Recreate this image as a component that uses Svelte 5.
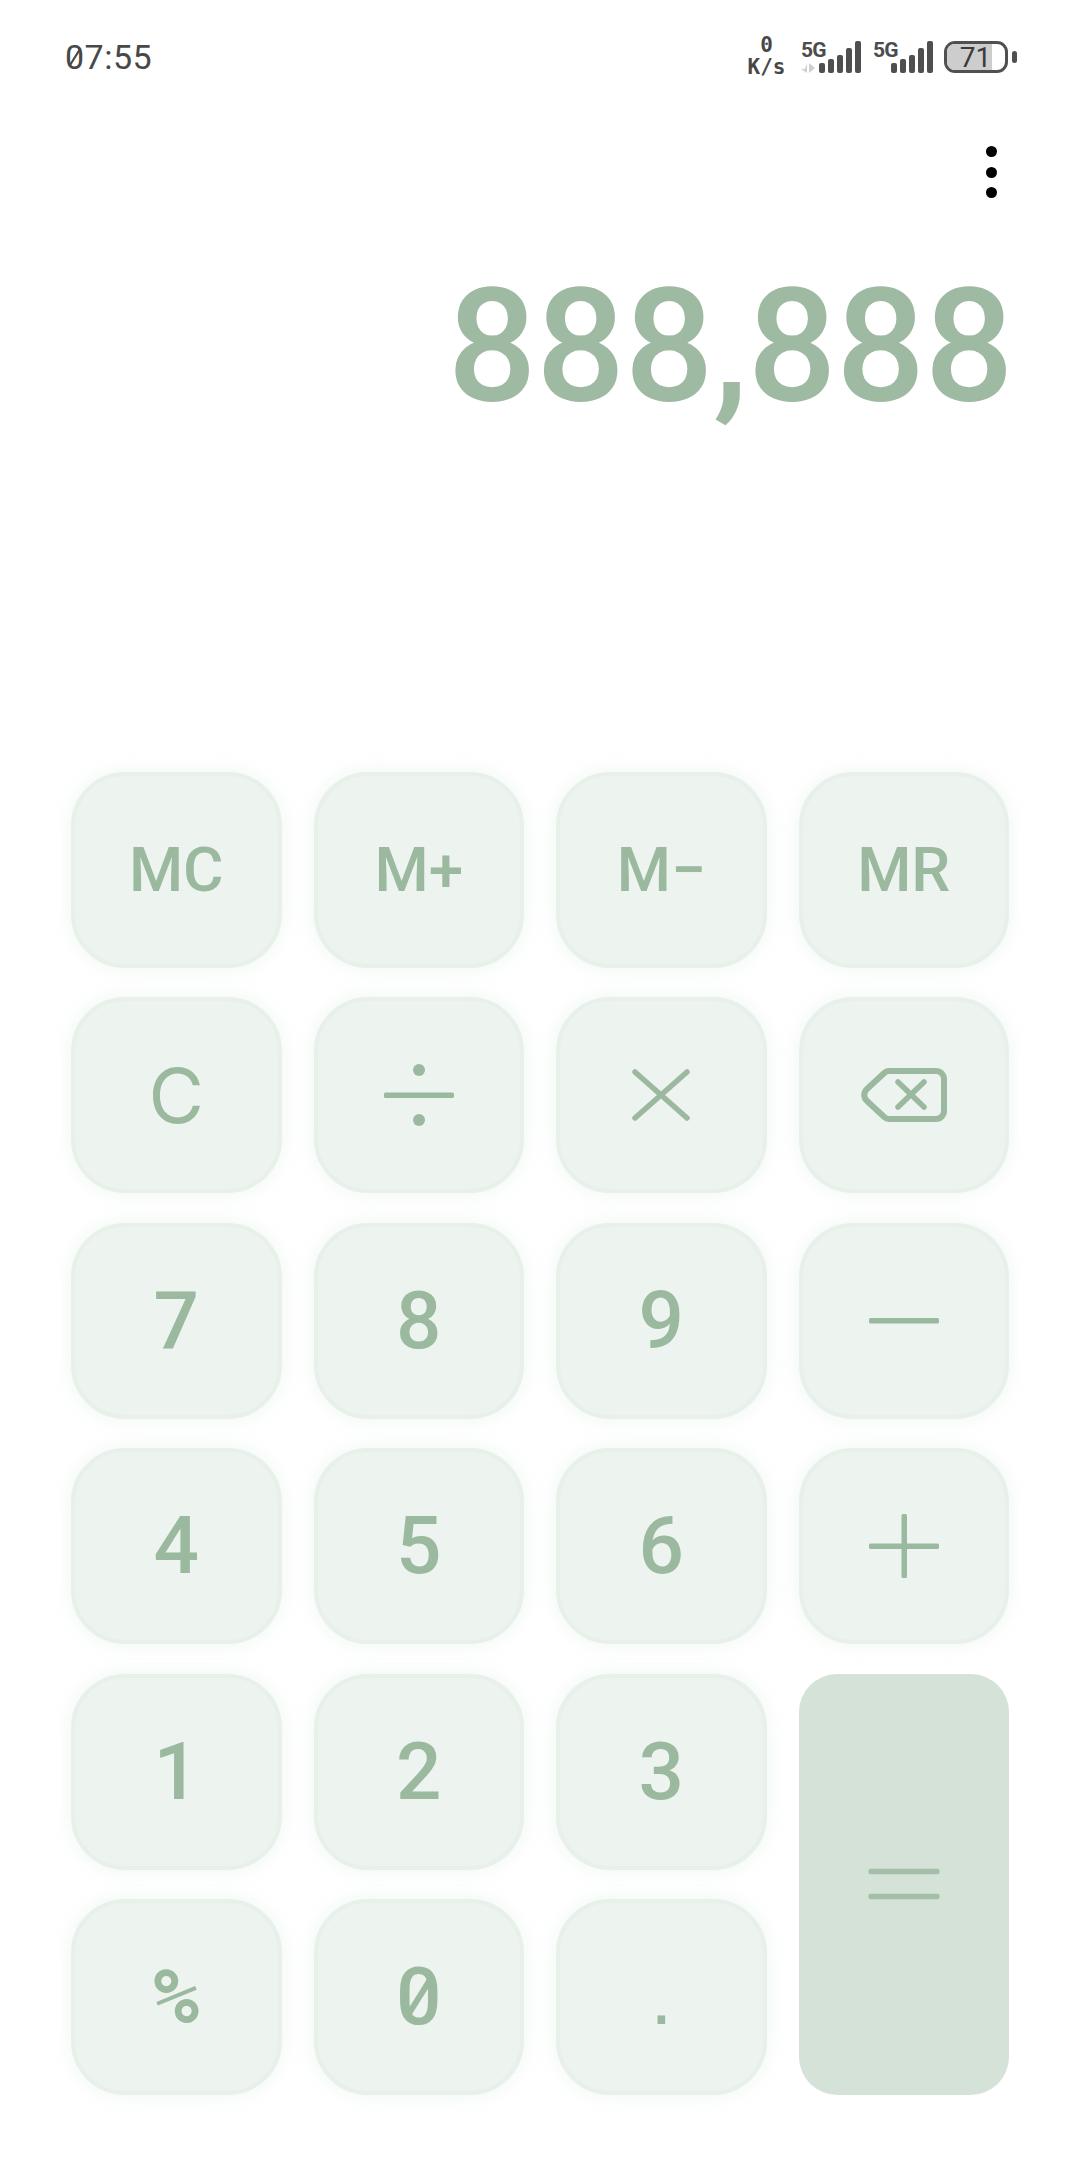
<script>
  // keys in reading order, the equals key spans two rows and is placed on its own
  const keys = [
    { label: 'MC', type: 'mem' },
    { label: 'M+', type: 'mem' },
    { label: 'M−', type: 'mem' },
    { label: 'MR', type: 'mem' },
    { label: 'C', type: 'clear' },
    { icon: 'divide' },
    { icon: 'times' },
    { icon: 'back' },
    { label: '7' },
    { label: '8' },
    { label: '9' },
    { icon: 'minus' },
    { label: '4' },
    { label: '5' },
    { label: '6' },
    { icon: 'plus' },
    { label: '1' },
    { label: '2' },
    { label: '3' },
    { icon: 'equals' },
    { label: '%', type: 'pct' },
    { label: '0', type: 'zero' },
    { label: '.', type: 'dot' }
  ];

  const bars = [10, 14, 18, 25, 32];
</script>

<div class="page">
  <div class="status">
    <span class="time"><span class="slashed">0</span>7:55</span>
    <div class="status-right">
      <div class="speed">
        <span>0</span>
        <span>K/s</span>
      </div>
      <div class="sim">
        <div class="sim-label">
          <span class="net">5G</span>
          <svg class="arrows" width="15" height="10" viewBox="0 0 15 10">
            <path d="M6 0v10L0 6h4zM8 10V0l6 5z" fill="#cfcfcf" />
          </svg>
        </div>
        <div class="bars">
          {#each bars as h}
            <span style="height: {h}px"></span>
          {/each}
        </div>
      </div>
      <div class="sim">
        <div class="sim-label">
          <span class="net">5G</span>
        </div>
        <div class="bars">
          {#each bars as h}
            <span style="height: {h}px"></span>
          {/each}
        </div>
      </div>
      <div class="battery">
        <div class="battery-body">
          <div class="battery-fill"></div>
          <span class="battery-text">71</span>
        </div>
        <div class="battery-nub"></div>
      </div>
    </div>
  </div>

  <div class="menu">
    <span></span>
    <span></span>
    <span></span>
  </div>

  <div class="display">888,888</div>

  <div class="keypad">
    {#each keys as key}
      {#if key.icon === 'equals'}
        <div class="key equals">
          <svg width="72" height="32" viewBox="0 0 72 32" fill="none" stroke="#a3bfa7" stroke-width="5.500" stroke-linecap="round">
            <path d="M3 3.500h66M3 28.500h66" />
          </svg>
        </div>
      {:else}
        <div class="key {key.type || ''}">
          {#if key.icon === 'divide'}
            <svg width="72" height="62" viewBox="0 0 72 62" fill="#9bb99f">
              <rect x="1" y="28.500" width="70" height="5.500" rx="1.500" />
              <circle cx="36" cy="6" r="6" />
              <circle cx="36" cy="56" r="6" />
            </svg>
          {:else if key.icon === 'times'}
            <svg width="58" height="52" viewBox="0 0 58 52" fill="none" stroke="#9bb99f" stroke-width="5.500" stroke-linecap="round">
              <path d="M3 3l52 46M55 3L3 49" />
            </svg>
          {:else if key.icon === 'back'}
            <svg class="back" width="86" height="54" viewBox="0 0 86 54" fill="none" stroke="#9bb99f" stroke-width="6" stroke-linejoin="round">
              <path d="M28 3h47a8 8 0 0 1 8 8v32a8 8 0 0 1-8 8H28a7 7 0 0 1-4.500-1.700L6 33a8 8 0 0 1 0-12L23.500 4.700A7 7 0 0 1 28 3z" />
              <path d="M37 14l26 25M63 14L37 39" stroke-width="5.500" stroke-linecap="round" />
            </svg>
          {:else if key.icon === 'minus'}
            <svg width="72" height="6" viewBox="0 0 72 6" fill="#9bb99f">
              <rect x="1" y="0" width="70" height="5.500" rx="1.500" />
            </svg>
          {:else if key.icon === 'plus'}
            <svg width="72" height="64" viewBox="0 0 72 64" fill="#9bb99f">
              <rect x="1" y="29.500" width="70" height="5.500" rx="1.500" />
              <rect x="33.500" y="0" width="5.500" height="64" rx="1.500" />
            </svg>
          {:else if key.type === 'zero'}
            <span class="slashed">{key.label}</span>
          {:else}
            <span>{key.label}</span>
          {/if}
        </div>
      {/if}
    {/each}
  </div>
</div>

<style>
  :global(body) {
    margin: 0;
    background: #fff;
  }

  .page {
    width: 1080px;
    height: 2160px;
    display: flex;
    flex-direction: column;
    font-family: Roboto, "Liberation Sans", sans-serif;
    box-sizing: border-box;
  }

  /* status bar */
  .status {
    height: 38px;
    margin-top: 38px;
    padding: 0 63px 0 65px;
    display: flex;
    justify-content: space-between;
    align-items: center;
  }

  .time {
    font-size: 34px;
    color: #484848;
    letter-spacing: 0.5px;
  }

  .status-right {
    display: flex;
    align-items: center;
  }

  .speed {
    width: 37px;
    display: flex;
    flex-direction: column;
    align-items: center;
    font-family: "DejaVu Sans Mono", monospace;
    font-size: 21px;
    font-weight: 700;
    line-height: 22px;
    color: #484848;
    margin-right: 16px;
    margin-top: -3px;
  }

  .sim {
    display: flex;
    align-items: flex-end;
    height: 32px;
    margin-right: 12px;
  }

  .sim-label {
    width: 24px;
    height: 32px;
    display: flex;
    flex-direction: column;
    gap: 4px;
  }

  .net {
    font-size: 21px;
    font-weight: 700;
    line-height: 18px;
    letter-spacing: -0.8px;
    color: #4c4c4c;
  }

  .arrows {
    display: block;
  }

  .bars {
    display: flex;
    align-items: flex-end;
    gap: 3px;
    margin-left: -6px;
  }

  .bars span {
    width: 6px;
    border-radius: 2px;
    background: #4f4f4f;
  }

  .battery {
    display: flex;
    align-items: center;
    margin-left: -1px;
    gap: 4px;
  }

  .battery-body {
    position: relative;
    width: 64px;
    height: 32px;
    box-sizing: border-box;
    border: 3.500px solid #505050;
    border-radius: 11px;
    overflow: hidden;
    display: flex;
  }

  .battery-fill {
    width: 45px;
    background: #cdcdcd;
  }

  .battery-text {
    position: absolute;
    left: 0;
    width: 57px;
    top: -2px;
    text-align: center;
    font-size: 28px;
    line-height: 32px;
    color: #3c3c3c;
  }

  .battery-nub {
    width: 5px;
    height: 12px;
    border-radius: 2.500px;
    background: #505050;
  }

  /* overflow menu */
  .menu {
    align-self: flex-end;
    margin: 70px 83px 0 0;
    display: flex;
    flex-direction: column;
    gap: 9.500px;
  }

  .menu span {
    width: 11px;
    height: 11px;
    border-radius: 50%;
    background: #000;
  }

  /* result */
  .display {
    margin-top: 56px;
    padding-right: 67px;
    text-align: right;
    font-size: 157px;
    font-weight: 500;
    line-height: 184px;
    letter-spacing: -0.7px;
    color: #9fbaa2;
  }

  /* keys */
  .keypad {
    margin-top: auto;
    margin-bottom: 65px;
    margin-left: 71px;
    width: 938px;
    height: 1323px;
    display: grid;
    grid-template-columns: repeat(4, 1fr);
    grid-template-rows: repeat(6, 1fr);
    column-gap: 32px;
    row-gap: 29.400px;
  }

  .key {
    box-sizing: border-box;
    display: flex;
    align-items: center;
    justify-content: center;
    border: 4px solid #e7f1ea;
    border-radius: 54px;
    background: #edf3ef;
    box-shadow: 0 0 20px rgba(200, 230, 210, 0.3);
    color: #9bb99f;
    font-size: 80px;
    font-weight: 500;
    line-height: 1;
  }

  .key span {
    display: block;
  }

  .key.mem {
    font-size: 62px;
    font-weight: 500;
  }

  .key.clear {
    font-family: Inter, Roboto, sans-serif;
    font-size: 76px;
    font-weight: 400;
  }

  .key.pct {
    font-family: "DejaVu Sans Mono", monospace;
    font-size: 76px;
    font-weight: 700;
  }

  .key.dot {
    font-family: "Liberation Sans", sans-serif;
    font-size: 80px;
    font-weight: 400;
  }

  .key.equals {
    grid-column: 4;
    grid-row: 5 / span 2;
    border: none;
    border-radius: 38px;
    background: #d5e2d7;
    box-shadow: none;
  }

  /* the zero in this theme has a stroke through it */
  .slashed {
    position: relative;
    display: inline-block;
  }

  .slashed::after {
    content: '';
    position: absolute;
    left: 50%;
    top: 50%;
    width: 0.07em;
    height: 0.62em;
    background: currentColor;
    transform: translate(-50%, -50%) rotate(32deg);
  }

  .time .slashed::after {
    width: 0.055em;
    height: 0.6em;
  }
</style>
